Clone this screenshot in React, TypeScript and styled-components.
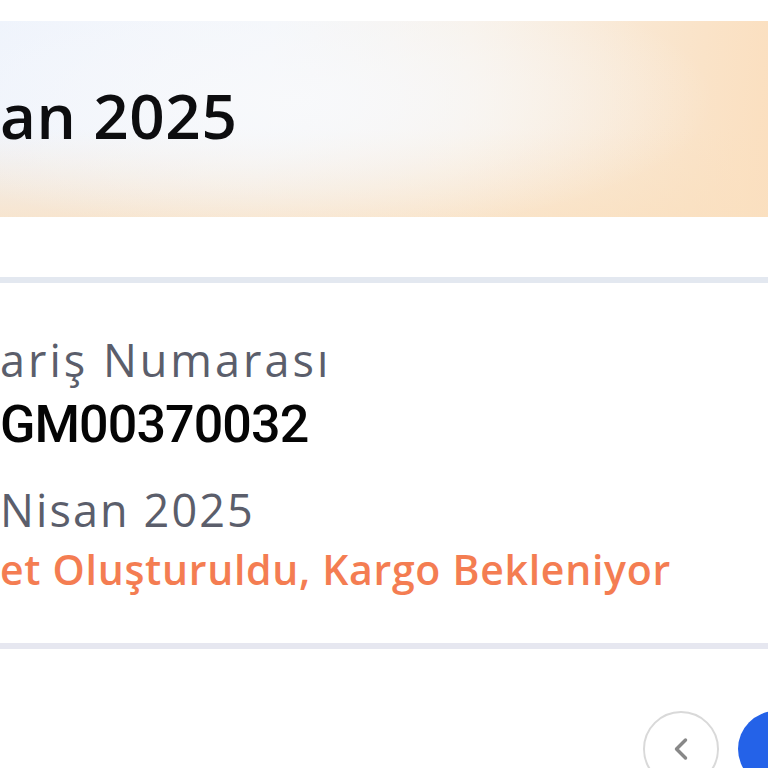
import React from "react";
import styled, { createGlobalStyle } from "styled-components";
import { ChevronLeft } from "lucide-react";

const Global = createGlobalStyle`
  html, body { margin: 0; padding: 0; background: #ffffff; }
  body { font-family: "Open Sans", "Noto Sans", sans-serif; }
`;

const Page = styled.div`
  width: 768px;
  height: 768px;
  overflow: hidden;
  background: #ffffff;
  display: flex;
  flex-direction: column;
  padding-top: 21px;
  box-sizing: border-box;
`;

const Banner = styled.section`
  height: 196px;
  flex-shrink: 0;
  box-sizing: border-box;
  padding-top: 63px;
  background:
    radial-gradient(ellipse 55% 70% at 38% 40%, rgba(248, 249, 251, 0.95) 0%, rgba(248, 249, 251, 0) 100%),
    linear-gradient(180deg, rgba(251, 226, 198, 0) 55%, rgba(250, 224, 192, 0.75) 100%),
    linear-gradient(95deg, #eef3fc 0%, #f3f6fb 35%, #f8f1e8 60%, #fae3c8 90%, #fbdfbf 100%);
`;

const Heading = styled.h1`
  margin: 0;
  font-family: "Open Sans", sans-serif;
  font-weight: 600;
  font-size: 62px;
  line-height: 62px;
  color: #0d0d0f;
  letter-spacing: 0.6px;
  white-space: nowrap;
`;

const Divider = styled.div<{ $top: number; $color: string }>`
  height: 6px;
  flex-shrink: 0;
  margin-top: ${(p) => p.$top}px;
  background: ${(p) => p.$color};
`;

const OrderCard = styled.article`
  display: flex;
  flex-direction: column;
  padding-top: 50px;
  padding-bottom: 48px;
`;

const Line = styled.div<{
  $size: number;
  $weight: number;
  $color: string;
  $gap: number;
  $family?: string;
  $spacing?: number;
}>`
  margin-top: ${(p) => p.$gap}px;
  font-family: ${(p) => p.$family ?? `"Open Sans", sans-serif`};
  font-size: ${(p) => p.$size}px;
  font-weight: ${(p) => p.$weight};
  line-height: 1.2;
  color: ${(p) => p.$color};
  letter-spacing: ${(p) => p.$spacing ?? 0}px;
  white-space: nowrap;
`;

const Pager = styled.nav`
  display: flex;
  justify-content: flex-end;
  gap: 19px;
  margin-top: 62px;
  margin-right: -46px;
`;

const RoundButton = styled.button<{ $primary?: boolean }>`
  width: 76px;
  height: 76px;
  flex-shrink: 0;
  border-radius: 50%;
  box-sizing: border-box;
  padding: 0;
  display: flex;
  align-items: center;
  justify-content: center;
  background: ${(p) => (p.$primary ? "#2462e8" : "#ffffff")};
  border: ${(p) => (p.$primary ? "none" : "2px solid #d9d9d9")};
  color: #888888;
`;

export default function App() {
  return (
    <>
      <Global />
      <Page>
        <Banner>
          <Heading>an 2025</Heading>
        </Banner>
        <Divider $top={60} $color="#e3e8f0" />
        <OrderCard>
          <Line $size={45} $weight={400} $color="#5b5e6b" $gap={0} $spacing={3}>
            ariş Numarası
          </Line>
          <Line
            $size={52}
            $weight={500}
            $color="#050505"
            $gap={7}
            $spacing={-0.9}
            $family={`Roboto, sans-serif`}
          >
            GM00370032
          </Line>
          <Line $size={45} $weight={400} $color="#5b5e6b" $gap={27} $spacing={2.1}>
            Nisan 2025
          </Line>
          <Line $size={41} $weight={600} $color="#f47d52" $gap={8} $spacing={0.7}>
            et Oluşturuldu, Kargo Bekleniyor
          </Line>
        </OrderCard>
        <Divider $top={0} $color="#e6e7f0" />
        <Pager>
          <RoundButton aria-label="Önceki">
            <ChevronLeft size={36} strokeWidth={2.3} />
          </RoundButton>
          <RoundButton $primary aria-label="Sonraki" />
        </Pager>
      </Page>
    </>
  );
}
